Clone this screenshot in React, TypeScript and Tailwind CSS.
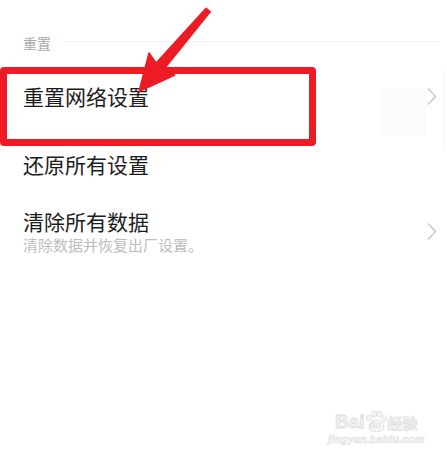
import React from 'react';

const Chevron = () => (
  <svg width="10" height="17" viewBox="0 0 10 17" fill="none">
    <polyline points="1.5,1 8.5,8.5 1.5,16" stroke="#c9c9c9" strokeWidth="1.6" strokeLinejoin="round" strokeLinecap="round" />
  </svg>
);

const Watermark = () => (
  <div className="absolute left-[328px] top-[410px] flex flex-col items-center select-none">
    <div className="flex items-end">
      <span className="text-[19px] leading-[20px] font-bold text-[#f6f6f6] [-webkit-text-stroke:0.8px_#dcdcdc] [font-family:'Liberation_Sans',sans-serif]">
        Bai
      </span>
      <div className="relative w-[22px] h-[22px]">
        <svg width="22" height="22" viewBox="0 0 22 22" className="absolute inset-0">
          <ellipse cx="4" cy="8" rx="2.5" ry="3" fill="#f6f6f6" stroke="#dcdcdc" strokeWidth="0.8" />
          <ellipse cx="9" cy="4" rx="2.5" ry="3" fill="#f6f6f6" stroke="#dcdcdc" strokeWidth="0.8" />
          <ellipse cx="14.5" cy="4" rx="2.5" ry="3" fill="#f6f6f6" stroke="#dcdcdc" strokeWidth="0.8" />
          <ellipse cx="19" cy="8.5" rx="2.5" ry="3" fill="#f6f6f6" stroke="#dcdcdc" strokeWidth="0.8" />
          <path d="M4 18 C4 12 8 10 11.5 10 C15 10 19 12 19 18 C19 21 15 21.5 11.5 21.5 C8 21.5 4 21 4 18 Z" fill="#f6f6f6" stroke="#dcdcdc" strokeWidth="0.8" />
        </svg>
        <span className="absolute left-[5px] top-[10px] text-[9px] leading-[10px] font-bold text-[#e0e0e0] [font-family:'Liberation_Sans',sans-serif]">
          du
        </span>
      </div>
      <span className="ml-[1px] text-[15px] leading-[18px] font-bold text-[#f6f6f6] [-webkit-text-stroke:0.7px_#dcdcdc] [font-family:'Noto_Sans_CJK_SC',sans-serif]">
        经验
      </span>
    </div>
    <span className="mt-[1px] text-[11px] leading-[12px] italic font-bold text-[#f6f6f6] [-webkit-text-stroke:0.5px_#dcdcdc] [font-family:'Liberation_Sans',sans-serif]">
      jingyan.baidu.com
    </span>
  </div>
);

export default function App() {
  return (
    <div className="relative w-[447px] h-[467px] overflow-hidden bg-white text-[#1c1c1c] [font-family:'Noto_Sans_CJK_SC','Noto_Sans',sans-serif]">
      {/* faint artifacts behind box */}
      <div className="absolute left-[380px] top-[88px] w-[46px] h-[47px] bg-[#fbfbfb]" />
      <div className="absolute left-[443px] top-[70px] w-px h-[80px] bg-[#f4f4f4]" />

      {/* section header */}
      <div className="relative flex items-start pt-[33px] pl-[23px] pr-[7px]">
        <span className="text-[14px] leading-[20px] text-[#a9a9a9]">重置</span>
        <div className="flex-1 h-px bg-[#f3f3f3] ml-[10px] mt-[8px]" />
      </div>

      {/* rows */}
      <div className="relative flex flex-col pl-[23px] pr-[10px]">
        <div className="mt-[29px] flex items-center justify-between">
          <span className="text-[21px] leading-[28px]">重置网络设置</span>
          <Chevron />
        </div>

        <div className="mt-[40px] flex items-center justify-between">
          <span className="text-[21px] leading-[28px]">还原所有设置</span>
        </div>

        <div className="mt-[30px] flex items-center justify-between">
          <div className="flex flex-col">
            <span className="text-[21px] leading-[27px]">清除所有数据</span>
            <span className="text-[15px] leading-[20px] text-[#bdbdbd]">清除数据并恢复出厂设置。</span>
          </div>
          <Chevron />
        </div>
      </div>

      {/* annotation: red box */}
      <div className="absolute left-0 top-[67px] w-[316px] h-[79px] border-[7px] border-[#ed1c24] rounded-[4px]" />

      {/* annotation: red arrow */}
      <svg className="absolute left-0 top-0" width="447" height="120" viewBox="0 0 447 120">
        <polygon
          points="210.2,11.8 163.7,69.5 174.8,75.1 139,91.5 149,52.9 156.1,62.9 206.1,8.2"
          fill="#ed1c24"
          stroke="#ed1c24"
          strokeWidth="1.5"
          strokeLinejoin="round"
        />
      </svg>

      <Watermark />
    </div>
  );
}
